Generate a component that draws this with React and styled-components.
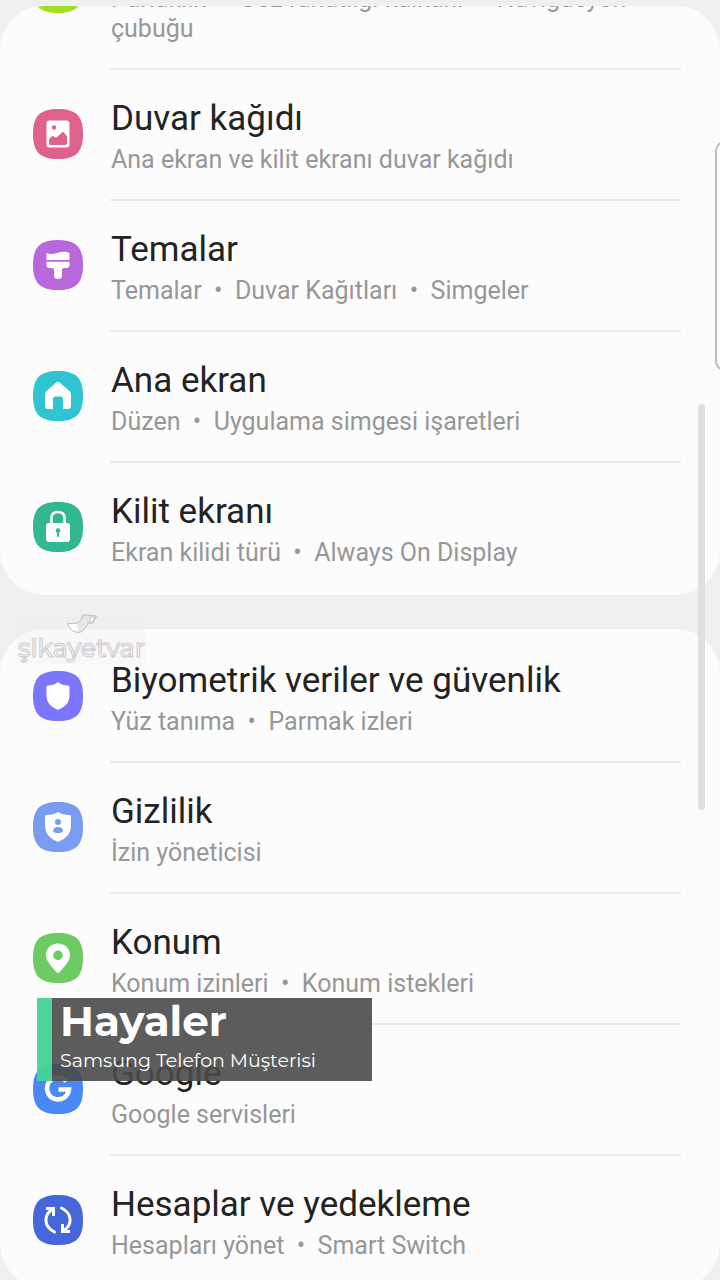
import React from "react";
import styled, { createGlobalStyle } from "styled-components";

const GlobalStyle = createGlobalStyle`
  * { box-sizing: border-box; }
  html, body, #root { height: 100%; }
  body {
    margin: 0;
    background: #f0f0f0;
    font-family: Roboto, "Noto Sans", sans-serif;
  }
`;

const Screen = styled.main`
  position: relative;
  height: 100vh;
  padding-top: 6px;
  overflow: hidden;
  background: #f0f0f0;
`;

const Card = styled.section`
  background: #fcfcfc;
  border-radius: 44px;
  overflow: hidden;
  margin-bottom: 34px;
`;

const List = styled.ul`
  list-style: none;
  margin: ${(p) => (p.$scrolled ? "-97px" : "0")} 0 0;
  padding: ${(p) => (p.$scrolled ? "0" : "3px")} 0 1px;
`;

const Row = styled.a`
  display: flex;
  align-items: center;
  padding: 0 39px 0 33px;
  color: inherit;
  text-decoration: none;
`;

const Icon = styled.svg`
  flex: none;
  width: 50px;
  height: 50px;
  margin: 0 27px 4px 0;
`;

const Body = styled.div`
  flex: 1;
  min-width: 0;
  padding: 26px 1px 24px;
  border-bottom: 2px solid ${(p) => (p.$last ? "transparent" : "#ebebeb")};
`;

const Title = styled.div`
  margin-bottom: 3px;
  font-size: 35px;
  line-height: 46px;
  color: #232323;
`;

const Summary = styled.div`
  font-size: 25px;
  line-height: 30px;
  color: #979797;
`;

const ScrollThumb = styled.div`
  position: absolute;
  top: 404px;
  right: 15px;
  width: 7px;
  height: 406px;
  border-radius: 4px;
  background: #e0e0e0;
`;

const EdgeHandle = styled.div`
  position: absolute;
  top: 141px;
  right: -15px;
  width: 20px;
  height: 230px;
  border: 2px solid #bdbdbd;
  border-radius: 10px;
  background: #fcfcfc;
`;

const Watermark = styled.div`
  position: absolute;
  top: 614px;
  left: 17px;
  width: 129px;
  height: 50px;
  display: flex;
  flex-direction: column;
  align-items: center;
  background: rgba(236, 236, 236, 0.25);
`;

const Brand = styled.span`
  font-family: Montserrat, Inter, sans-serif;
  font-size: 25px;
  font-weight: 500;
  line-height: 28px;
  color: #f7f5f7;
  -webkit-text-stroke: 1px #d0cbd0;
  white-space: nowrap;
`;

const Caption = styled.aside`
  position: absolute;
  top: 998px;
  left: 37px;
  width: 335px;
  height: 83px;
  padding-left: 8px;
  border-left: 15px solid rgba(69, 211, 149, 0.95);
  background: rgba(74, 74, 74, 0.9);
  background-clip: padding-box;
  color: #fff;
  font-family: Montserrat, Inter, sans-serif;
`;

const CaptionName = styled.div`
  font-size: 42px;
  line-height: 46px;
  font-weight: 700;
`;

const CaptionRole = styled.div`
  font-size: 19px;
  line-height: 34px;
  font-weight: 400;
`;

const drawings = {
  display: null,
  wallpaper: (
    <>
      <rect x="13.5" y="11.5" width="23" height="27" rx="3" fill="#fff" />
      <circle cx="21" cy="18.5" r="2.2" fill="#e0608e" />
      <path d="M16 31Q18 27 20.500 27Q22 29.500 24 28L29 23.500Q30 22.500 31 23.500L34 27.500V34Q34 36 32 36H18Q16 36 16 34Z" fill="#e0608e" />
    </>
  ),
  themes: (
    <>
      <path d="M13.500 13Q18 15 24 13Q31 10.500 36.500 13V20H13.500Z" fill="#fff" />
      <path d="M13.500 21.700H36.500V25Q36.500 28 33.500 28H31Q29 28 29 30V36Q29 39 25 39T21 36V30Q21 28 19 28H16.500Q13.500 28 13.500 25Z" fill="#fff" />
    </>
  ),
  home: (
    <path d="M23 11.800Q25 10 27 11.800L36.500 20Q38 21.300 38 23V35Q38 38 35 38H30V28Q30 25.500 27.500 25.500H22.500Q20 25.500 20 28V38H15Q12 38 12 35V23Q12 21.300 13.500 20Z" fill="#fff" />
  ),
  lock: (
    <>
      <path d="M18.500 23V16Q18.500 10 25 10T31.500 16V23" fill="none" stroke="#fff" strokeWidth="2.6" />
      <rect x="13" y="21" width="24" height="19" rx="3" fill="#fff" />
      <circle cx="25" cy="28.500" r="2.300" fill="#32b890" />
      <path d="M25 29V34" stroke="#32b890" strokeWidth="2.200" strokeLinecap="round" />
    </>
  ),
  shield: (
    <path d="M25 11Q29 14.500 35 14.500Q36.500 14.500 36.500 16V25Q36.500 34 26 38.500Q25 39 24 38.500Q13.500 34 13.500 25V16Q13.500 14.500 15 14.500Q21 14.500 25 11Z" fill="#fff" />
  ),
  privacy: (
    <>
      <path d="M25 10Q29 12.800 36.500 13Q38 13 38 14.500V24Q38 34.500 26 39.500Q25 40 24 39.500Q12 34.500 12 24V14.500Q12 13 13.500 13Q21 12.800 25 10Z" fill="#fff" />
      <circle cx="25" cy="20" r="3" fill="#7a9cf0" />
      <path d="M20 29Q20 25 25 25T30 29Q29 31 25 31T20 29Z" fill="#7a9cf0" />
    </>
  ),
  location: (
    <path fillRule="evenodd" d="M25 10.500C18 10.500 13 15.500 13 22C13 28 18.500 33.500 23.300 39Q25 41 26.700 39C31.500 33.500 37 28 37 22C37 15.500 32 10.500 25 10.500ZM25 17.500A4.800 4.800 0 1 1 25 27.100A4.800 4.800 0 1 1 25 17.500Z" fill="#fff" />
  ),
  google: (
    <path d="M33.500 17.300A11 11 0 1 0 36 25.500H25.500" fill="none" stroke="#fff" strokeWidth="4.600" />
  ),
  sync: (
    <g fill="none" stroke="#fff" strokeWidth="3">
      <path d="M21.500 37C10.500 31.500 10.500 20.500 19 14.500" strokeLinecap="round" />
      <path d="M13 13.500H20.500V21" />
      <path d="M28.500 13C39.500 18.500 39.500 29.500 31 35.500" strokeLinecap="round" />
      <path d="M37 36.500H29.500V29" />
    </g>
  ),
};

const displayGroup = [
  { icon: "display", color: "#a0e020", title: "Ekran", parts: ["Parlaklık", "Göz rahatlığı kalkanı", "Navigasyon çubuğu"] },
  { icon: "wallpaper", color: "#e0608e", title: "Duvar kağıdı", parts: ["Ana ekran ve kilit ekranı duvar kağıdı"] },
  { icon: "themes", color: "#b968dc", title: "Temalar", parts: ["Temalar", "Duvar Kağıtları", "Simgeler"] },
  { icon: "home", color: "#30c4d2", title: "Ana ekran", parts: ["Düzen", "Uygulama simgesi işaretleri"] },
  { icon: "lock", color: "#32b890", title: "Kilit ekranı", parts: ["Ekran kilidi türü", "Always On Display"] },
];

const securityGroup = [
  { icon: "shield", color: "#7b76fb", title: "Biyometrik veriler ve güvenlik", parts: ["Yüz tanıma", "Parmak izleri"] },
  { icon: "privacy", color: "#7a9cf0", title: "Gizlilik", parts: ["İzin yöneticisi"] },
  { icon: "location", color: "#6ccb62", title: "Konum", parts: ["Konum izinleri", "Konum istekleri"] },
  { icon: "google", color: "#4a88f6", title: "Google", parts: ["Google servisleri"] },
  { icon: "sync", color: "#4666dc", title: "Hesaplar ve yedekleme", parts: ["Hesapları yönet", "Smart Switch"] },
];

function SettingsGroup({ items, scrolled }) {
  return (
    <Card>
      <List $scrolled={scrolled}>
        {items.map((item, i) => (
          <li key={item.title}>
            <Row href="#">
              <Icon viewBox="0 0 50 50" aria-hidden="true">
                <path d="M25 0C43 0 50 7 50 25S43 50 25 50 0 43 0 25 7 0 25 0Z" fill={item.color} />
                {drawings[item.icon]}
              </Icon>
              <Body $last={i === items.length - 1}>
                <Title>{item.title}</Title>
                <Summary>{item.parts.join("\u00a0 • \u00a0")}</Summary>
              </Body>
            </Row>
          </li>
        ))}
      </List>
    </Card>
  );
}

export default function App() {
  return (
    <>
      <GlobalStyle />
      <Screen>
        <SettingsGroup items={displayGroup} scrolled />
        <SettingsGroup items={securityGroup} />
        <EdgeHandle />
        <ScrollThumb />
        <Watermark>
          <svg width="32" height="20" viewBox="0 0 32 20" aria-hidden="true">
            <path d="M1.500 9.500L11 9Q15 8 17 1H22L30.500 2L27 9H22Q18 18.500 12 18.500Q4 18 1.500 9.500Z" fill="#e8e7e8" stroke="#c4bfc4" />
            <path d="M2.500 10.500L11 10Q10 14 13 17.500Q5 17.500 2.500 10.500Z" fill="#fff" />
            <path d="M25 3L29 3L26.500 8H23Z" fill="#fff" stroke="#c4bfc4" />
          </svg>
          <Brand>şikayetvar</Brand>
        </Watermark>
        <Caption>
          <CaptionName>Hayaler</CaptionName>
          <CaptionRole>Samsung Telefon Müşterisi</CaptionRole>
        </Caption>
      </Screen>
    </>
  );
}
